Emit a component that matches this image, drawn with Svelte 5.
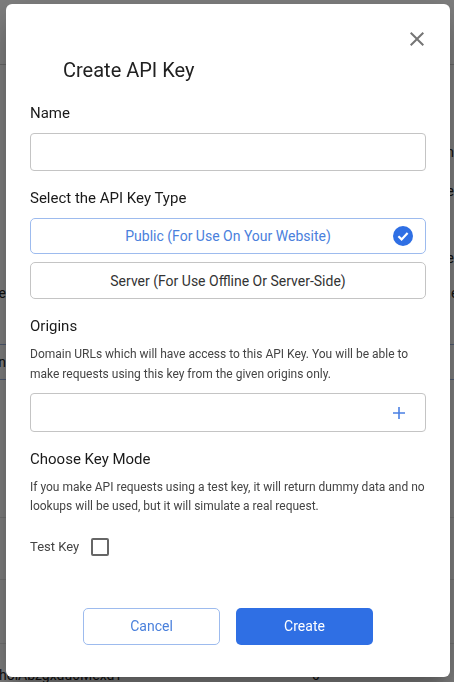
<script>
  let keyType = $state('public');
  let testKey = $state(false);

  // what shows of the table behind the dialog
  const rows = [
    { h: 65, line: true },
    { h: 97, right: 'n' },
    { h: 39, right: 'e' },
    { h: 67, right: 'e' },
    { h: 35, left: 'e', right: 'e' },
    { h: 41 },
    { h: 36, left: 'n', accent: true },
    { h: 138, line: true, faint: true },
    { h: 62, line: true, faint: true },
    { h: 64, line: true, faint: true },
  ];
</script>

<div class="page">
  {#each rows as r}
    <div class="row" class:line={r.line} class:faint={r.faint} class:accent={r.accent} style:height="{r.h}px">
      <span class="left">{r.left ?? ''}</span>
      <span class="right">{r.right ?? ''}</span>
    </div>
  {/each}
  <div class="last">
    <span class="token">hoiAbzgxdu6MexdT</span>
    <span class="count">0</span>
  </div>
</div>

<div class="backdrop">
  <div class="dialog">
    <div class="close-row">
      <button class="close" aria-label="Close">
        <svg width="24" height="24" viewBox="0 0 24 24"><path fill="#757575" d="M19 6.41 17.59 5 12 10.59 6.41 5 5 6.41 10.59 12 5 17.59 6.41 19 12 13.41 17.59 19 19 17.59 13.41 12z"/></svg>
      </button>
    </div>
    <h2>Create API Key</h2>

    <div class="label first">Name</div>
    <input class="field" type="text" />

    <div class="label type">Select the API Key Type</div>
    <button class="opt sel" class:on={keyType == 'public'} onclick={() => keyType = 'public'}>
      Public (For Use On Your Website)
      <svg class="tick" width="20" height="20" viewBox="0 0 20 20">
        <circle cx="10" cy="10" r="10" fill="#2f6fe4"/>
        <path d="M5.4 10.3l3.2 3.1 6-6.3" fill="none" stroke="#fff" stroke-width="2.2"/>
      </svg>
    </button>
    <button class="opt server">Server (For Use Offline Or Server-Side)</button>

    <div class="label origins">Origins</div>
    <p class="desc">Domain URLs which will have access to this API Key. You will be able to make requests using this key from the given origins only.</p>
    <div class="field add">
      <svg width="14" height="14" viewBox="0 0 14 14"><path d="M7 1v12M1 7h12" stroke="#4a80e4" stroke-width="1.6" fill="none"/></svg>
    </div>

    <div class="label mode">Choose Key Mode</div>
    <p class="desc tight">If you make API requests using a test key, it will return dummy data and no lookups will be used, but it will simulate a real request.</p>

    <label class="test">
      <span>Test Key</span>
      <input type="checkbox" bind:checked={testKey} />
    </label>

    <div class="actions">
      <button class="btn cancel">Cancel</button>
      <button class="btn create">Create</button>
    </div>
  </div>
</div>

<style>
  :global(body) {
    margin: 0;
    background: #fff;
    font-family: Roboto, "Liberation Sans", sans-serif;
    overflow: hidden;
  }
  .page {
    height: 682px;
    overflow: hidden;
    font-size: 14px;
    color: #212121;
  }
  .row {
    box-sizing: border-box;
    display: flex;
    align-items: flex-end;
    line-height: 20px;
  }
  .row.line { border-bottom: 1px solid #cfcfcf; }
  .row.faint { border-bottom-color: #e6e6e6; }
  .row.accent {
    align-items: center;
    border-top: 1px solid #9db3e0;
    border-bottom: 1px solid #9db3e0;
  }
  .left {
    width: 6px;
    display: flex;
    justify-content: flex-end;
  }
  .right { margin-left: 445px; }
  .last {
    display: flex;
    padding-top: 21px;
    line-height: 20px;
  }
  .token { margin-left: -1px; width: 313px; }

  .backdrop {
    position: fixed;
    inset: 0;
    background: rgba(0, 0, 0, 0.5);
  }
  .dialog {
    position: absolute;
    left: 6px;
    top: 4px;
    width: 444px;
    height: 673px;
    box-sizing: border-box;
    padding: 0 24px;
    background: #fff;
    border-radius: 6px;
    box-shadow: 0 11px 15px -7px rgba(0,0,0,.2), 0 24px 38px 3px rgba(0,0,0,.14), 0 9px 46px 8px rgba(0,0,0,.12);
    color: #212121;
  }
  .close-row {
    display: flex;
    justify-content: flex-end;
    padding-top: 23px;
    margin-right: -3px;
  }
  .close {
    display: flex;
    padding: 0;
    border: 0;
    background: none;
  }
  h2 {
    margin: 0;
    padding: 7px 0 0 33px;
    font-size: 20px;
    font-weight: 400;
    line-height: 24px;
  }
  .label {
    font-size: 15px;
    line-height: 20px;
    color: #1a1a1a;
  }
  .label.first { margin-top: 21px; }
  .label.type { margin-top: 17px; }
  .label.origins { margin-top: 17px; }
  .label.mode { margin-top: 17px; }
  .field {
    display: block;
    box-sizing: border-box;
    width: 396px;
    height: 38px;
    margin: 10px 0 0;
    border: 1px solid #c4c4c4;
    border-radius: 4px;
    background: #fff;
  }
  .add {
    display: flex;
    align-items: center;
    justify-content: flex-end;
    height: 39px;
    margin-top: 9px;
    padding-right: 19px;
  }
  .opt {
    position: relative;
    display: block;
    box-sizing: border-box;
    width: 396px;
    height: 37px;
    padding: 0;
    border: 1px solid #c4c4c4;
    border-radius: 5px;
    background: #fff;
    color: #333;
    font: 400 14px Roboto, "Liberation Sans", sans-serif;
  }
  .opt.sel {
    height: 36px;
    margin-top: 10px;
    border-color: #9dbbee;
    color: #4a80dc;
  }
  .opt.server { margin-top: 8px; }
  .tick {
    position: absolute;
    right: 12px;
    top: 7px;
  }
  .desc {
    margin: 8px 0 0;
    font-size: 12px;
    line-height: 20px;
    color: #444;
  }
  .desc.tight { line-height: 19px; margin-top: 9px; }
  .test {
    display: flex;
    align-items: center;
    gap: 12px;
    margin-top: 20px;
    font-size: 13px;
    color: #444;
  }
  .test input {
    appearance: none;
    width: 18px;
    height: 18px;
    margin: 2px 0 0;
    border: 2px solid #666;
    border-radius: 2px;
    background: #fff;
  }
  .actions {
    display: flex;
    justify-content: center;
    gap: 16px;
    margin-top: 52px;
  }
  .btn {
    box-sizing: border-box;
    width: 137px;
    height: 37px;
    padding: 0 0 2px;
    border-radius: 5px;
    font: 400 14px Roboto, "Liberation Sans", sans-serif;
  }
  .cancel {
    border: 1px solid #9dbbee;
    background: #fff;
    color: #4a80dc;
  }
  .create {
    border: 0;
    background: #2f6fe4;
    color: #fff;
  }
</style>
